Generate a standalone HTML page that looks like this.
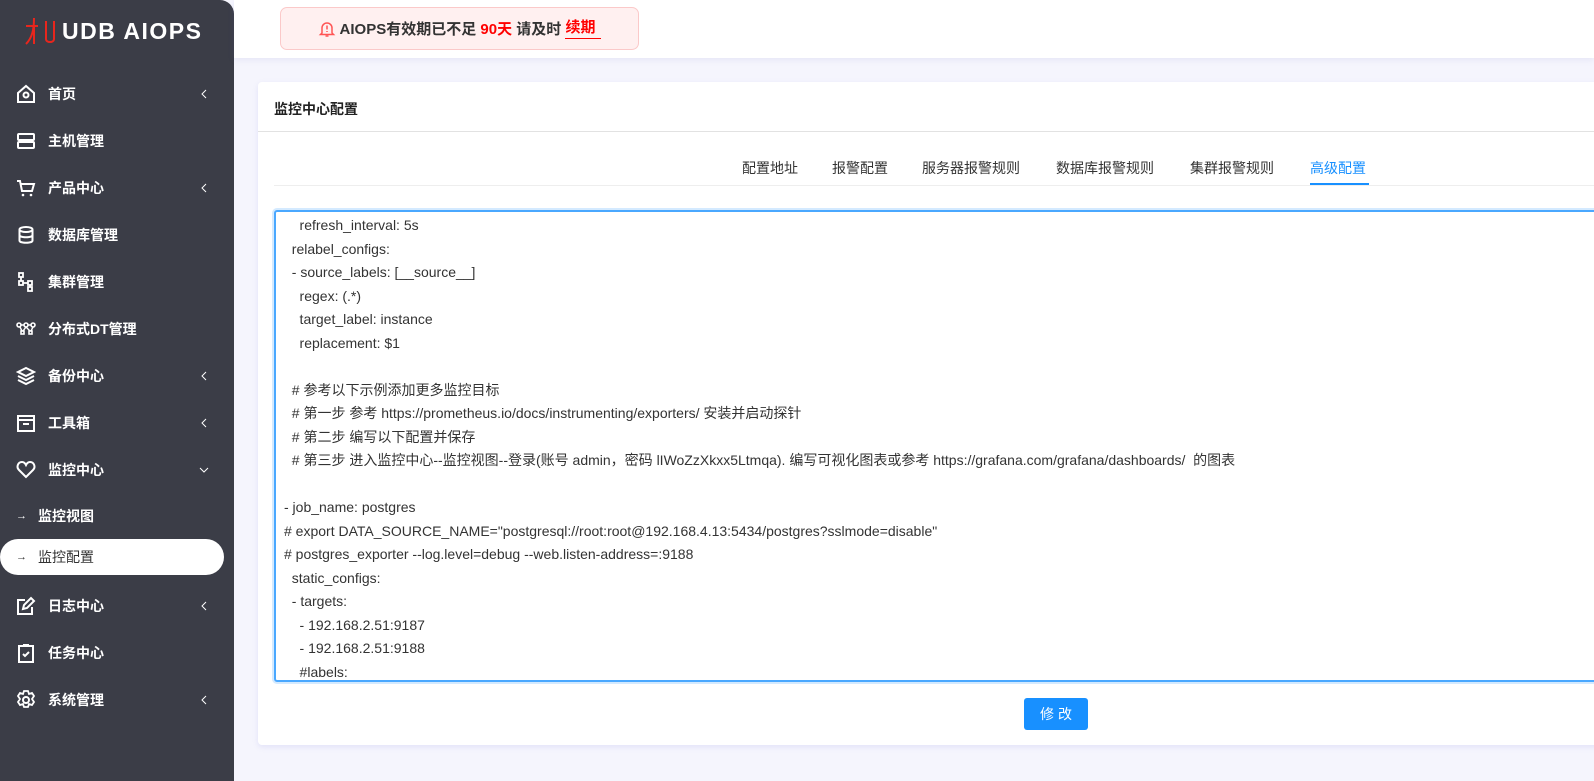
<!DOCTYPE html>
<html><head><meta charset="utf-8"><style>
*{box-sizing:border-box;margin:0;padding:0}
body{width:1594px;height:781px;overflow:hidden;background:#f5f5fd;font-family:"Liberation Sans","Noto Sans CJK SC",sans-serif;position:relative}
.sb{position:absolute;left:0;top:0;width:234px;height:781px;background:#3b3d47;border-top-right-radius:14px}
.logo{position:absolute;left:24px;top:14px;height:34px;display:flex;align-items:center}
.logo span{color:#fff;font-size:23px;font-weight:bold;letter-spacing:1.5px;margin-left:4px}
.it{position:absolute;left:0;width:234px;height:36px;display:flex;align-items:center;color:#fff;font-size:14px;font-weight:bold}
.it svg.ic{position:absolute;left:16px;width:20px;height:20px}
.it .t{position:absolute;left:48px}
.it .ch{position:absolute;left:199px;width:10px;height:10px}
.sub .t{left:38px;font-weight:bold}
.sub .ar{position:absolute;left:16px;font-size:11px}
.act{width:224px;background:#fff;color:#333;border-radius:18px}
.hd{position:absolute;left:234px;top:0;right:0;height:58px;background:#fff;box-shadow:0 2px 6px rgba(120,120,200,.12)}
.note{position:absolute;left:280px;top:7px;width:359px;height:43px;background:#fff0f0;border:1px solid #fbc9c9;border-radius:7px;display:flex;align-items:center;justify-content:center;font-size:15px;font-weight:bold;color:#333}
.card{position:absolute;left:258px;top:82px;width:1400px;height:663px;background:#fff;border-radius:4px;box-shadow:0 2px 6px rgba(120,120,220,.15)}
.ttl{position:absolute;left:16px;top:17px;font-size:14px;font-weight:bold;color:#222}
.dv{position:absolute;left:0;top:49px;width:100%;height:1px;background:#e2e2e2}
.tabs{position:absolute;left:16px;top:103px;width:1400px;height:1px;background:#eee}
.tab{position:absolute;top:76px;font-size:14px;color:#333}
.ta{position:absolute;left:16px;top:128px;width:1400px;height:472px;border:2px solid #4aa8ff;border-radius:3px;box-shadow:0 0 0 2px #d4eaff;overflow:hidden}
.ta pre{font-family:"Liberation Sans","Noto Sans CJK SC",sans-serif;font-size:14px;line-height:23.5px;color:#333;padding:2px 0 0 8px;white-space:pre}
.btn{position:absolute;left:766px;top:616px;width:64px;height:32px;background:#1890ff;color:#fff;border-radius:3px;font-size:14px;display:flex;align-items:center;justify-content:center;letter-spacing:4px;padding-left:4px}
</style></head><body>
<div class="sb">
<div class="logo"><svg width="34" height="32" viewBox="0 0 34 32"><path d="M2 11h12M10 3c0 12-2 20-8 26M10 11v18M22 6v18c0 4 8 4 8 0V6" stroke="#e8261d" stroke-width="2" fill="none"/></svg><span>UDB AIOPS</span></div>
<div class="it" style="top:76px"><svg class="ic" viewBox="0 0 20 20"><path d="M2 9L10 2l8 7v9H2z" fill="none" stroke="#fff" stroke-width="2"/><circle cx="10" cy="11" r="2.5" fill="none" stroke="#fff" stroke-width="2"/></svg><span class="t">首页</span><svg class="ch" viewBox="0 0 10 10"><path d="M7 1L3 5l4 4" stroke="#fff" fill="none"/></svg></div>
<div class="it" style="top:123px"><svg class="ic" viewBox="0 0 20 20"><rect x="2" y="3" width="16" height="6" rx="1" fill="none" stroke="#fff" stroke-width="2"/><rect x="2" y="11" width="16" height="6" rx="1" fill="none" stroke="#fff" stroke-width="2"/></svg><span class="t">主机管理</span></div>
<div class="it" style="top:170px"><svg class="ic" viewBox="0 0 20 20"><path d="M1 3h3l2 10h10l2-7H5" fill="none" stroke="#fff" stroke-width="2"/><circle cx="7" cy="17" r="1.3" fill="#fff"/><circle cx="15" cy="17" r="1.3" fill="#fff"/></svg><span class="t">产品中心</span><svg class="ch" viewBox="0 0 10 10"><path d="M7 1L3 5l4 4" stroke="#fff" fill="none"/></svg></div>
<div class="it" style="top:217px"><svg class="ic" viewBox="0 0 20 20"><ellipse cx="10" cy="4.5" rx="6.5" ry="2.5" fill="none" stroke="#fff" stroke-width="2"/><path d="M3.5 4.5v11c0 3 13 3 13 0v-11M3.5 10c0 3 13 3 13 0" fill="none" stroke="#fff" stroke-width="2"/></svg><span class="t">数据库管理</span></div>
<div class="it" style="top:264px"><svg class="ic" viewBox="0 0 20 20"><rect x="3" y="1" width="4" height="4" fill="none" stroke="#fff" stroke-width="1.8"/><rect x="3" y="9" width="4" height="4" fill="none" stroke="#fff" stroke-width="1.8"/><rect x="12" y="9" width="4" height="4" fill="none" stroke="#fff" stroke-width="1.8"/><rect x="12" y="15" width="4" height="4" fill="none" stroke="#fff" stroke-width="1.8"/><path d="M5 5v4M7 11h5M14 13v2" stroke="#fff" stroke-width="1.8"/></svg><span class="t">集群管理</span></div>
<div class="it" style="top:311px"><svg class="ic" viewBox="0 0 20 20"><circle cx="3" cy="6" r="2" fill="none" stroke="#fff" stroke-width="1.6"/><circle cx="10" cy="6" r="2" fill="none" stroke="#fff" stroke-width="1.6"/><circle cx="17" cy="6" r="2" fill="none" stroke="#fff" stroke-width="1.6"/><rect x="5" y="12" width="3" height="3" fill="none" stroke="#fff" stroke-width="1.6"/><rect x="13" y="12" width="3" height="3" fill="none" stroke="#fff" stroke-width="1.6"/><path d="M5 6h3M12 6h3M4 8l2 4M10 8l-3 4M10 8l4 4M17 8l-2 4" stroke="#fff" stroke-width="1.4"/></svg><span class="t">分布式DT管理</span></div>
<div class="it" style="top:358px"><svg class="ic" viewBox="0 0 20 20"><path d="M10 2l8 4-8 4-8-4zM2 10l8 4 8-4M2 14l8 4 8-4" fill="none" stroke="#fff" stroke-width="2"/></svg><span class="t">备份中心</span><svg class="ch" viewBox="0 0 10 10"><path d="M7 1L3 5l4 4" stroke="#fff" fill="none"/></svg></div>
<div class="it" style="top:405px"><svg class="ic" viewBox="0 0 20 20"><rect x="2" y="3" width="16" height="15" fill="none" stroke="#fff" stroke-width="2"/><path d="M2 7h16M7 11h6" stroke="#fff" stroke-width="2"/></svg><span class="t">工具箱</span><svg class="ch" viewBox="0 0 10 10"><path d="M7 1L3 5l4 4" stroke="#fff" fill="none"/></svg></div>
<div class="it" style="top:452px"><svg class="ic" viewBox="0 0 20 20"><path d="M10 17L3 10C0 7 2 2 6 2c2 0 3 1 4 3 1-2 2-3 4-3 4 0 6 5 3 8z" fill="none" stroke="#fff" stroke-width="2"/></svg><span class="t">监控中心</span><svg class="ch" viewBox="0 0 10 10"><path d="M1 3l4 4 4-4" stroke="#fff" fill="none"/></svg></div>
<div class="it sub" style="top:498px"><span class="ar">→</span><span class="t">监控视图</span></div>
<div class="it sub act" style="top:539px"><span class="ar">→</span><span class="t" style="font-weight:normal">监控配置</span></div>
<div class="it" style="top:588px"><svg class="ic" viewBox="0 0 20 20"><path d="M16 11v7H2V4h7" fill="none" stroke="#fff" stroke-width="2"/><path d="M7 13l1-4 7-7 3 3-7 7z" fill="none" stroke="#fff" stroke-width="2"/></svg><span class="t">日志中心</span><svg class="ch" viewBox="0 0 10 10"><path d="M7 1L3 5l4 4" stroke="#fff" fill="none"/></svg></div>
<div class="it" style="top:635px"><svg class="ic" viewBox="0 0 20 20"><rect x="3" y="3" width="14" height="16" fill="none" stroke="#fff" stroke-width="2"/><path d="M7 2h6M7 11l2 2 4-4" fill="none" stroke="#fff" stroke-width="2"/></svg><span class="t">任务中心</span></div>
<div class="it" style="top:682px"><svg class="ic" viewBox="0 0 20 20"><circle cx="10" cy="10" r="3" fill="none" stroke="#fff" stroke-width="2"/><path d="M8 1h4l1 3 3-1 2 3-2 3 2 3-2 3-3-1-1 3H8l-1-3-3 1-2-3 2-3-2-3 2-3 3 1z" fill="none" stroke="#fff" stroke-width="1.8"/></svg><span class="t">系统管理</span><svg class="ch" viewBox="0 0 10 10"><path d="M7 1L3 5l4 4" stroke="#fff" fill="none"/></svg></div>
</div>
<div class="hd"></div>
<div class="note"><svg width="18" height="18" viewBox="0 0 18 18" style="margin-right:4px"><path d="M4 13V8a5 5 0 0110 0v5l1.5 1.5h-13z" fill="none" stroke="#f55" stroke-width="1.5"/><path d="M9 5.5v4M9 11v1M7.5 16h3" stroke="#f55" stroke-width="1.5"/></svg>AIOPS有效期已不足&nbsp;<span style="color:#f00;font-weight:bold">90天</span>&nbsp;请及时&nbsp;<span style="color:#f00;border-bottom:1.5px solid #f00;padding:0 6px 1px 0;line-height:18px">续期</span></div>
<div class="card">
<div class="ttl">监控中心配置</div><div class="dv"></div>
<div class="tab" style="left:484px">配置地址</div>
<div class="tab" style="left:574px">报警配置</div>
<div class="tab" style="left:664px">服务器报警规则</div>
<div class="tab" style="left:798px">数据库报警规则</div>
<div class="tab" style="left:932px">集群报警规则</div>
<div class="tab" style="left:1052px;color:#1890ff">高级配置</div>
<div class="tabs"></div>
<div style="position:absolute;left:1052px;top:101px;width:59px;height:2px;background:#1890ff"></div>
<div class="ta"><pre>    refresh_interval: 5s
  relabel_configs:
  - source_labels: [__source__]
    regex: (.*)
    target_label: instance
    replacement: $1

  # 参考以下示例添加更多监控目标
  # 第一步 参考 https://prometheus.io/docs/instrumenting/exporters/ 安装并启动探针
  # 第二步 编写以下配置并保存
  # 第三步 进入监控中心--监控视图--登录(账号 admin，密码 lIWoZzXkxx5Ltmqa). 编写可视化图表或参考 https://grafana.com/grafana/dashboards/  的图表

- job_name: postgres
# export DATA_SOURCE_NAME="postgresql://root:root@192.168.4.13:5434/postgres?sslmode=disable"
# postgres_exporter --log.level=debug --web.listen-address=:9188
  static_configs:
  - targets:
    - 192.168.2.51:9187
    - 192.168.2.51:9188
    #labels:</pre></div>
<div class="btn">修改</div>
</div>
</body></html>
